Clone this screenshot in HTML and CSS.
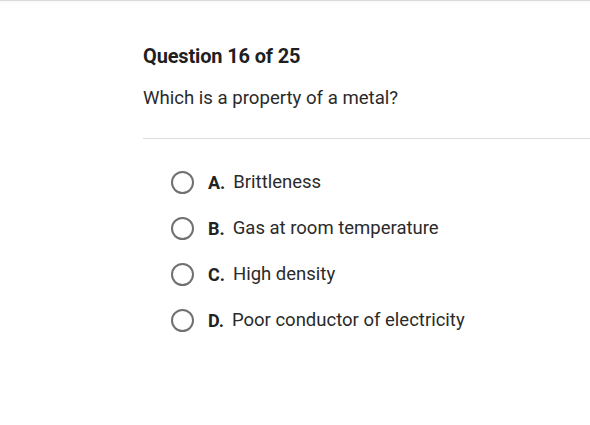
FILE: index.html
```html
<!DOCTYPE html>
<html>
<head>
<meta charset="utf-8">
<link rel="stylesheet" href="styles.css">
</head>
<body>
<div class="topbar"></div>
<main class="quiz">
  <h1 class="qnum">Question 16 of 25</h1>
  <p class="qtext">Which is a property of a metal?</p>
  <hr class="divider">
  <ul class="options">
    <li class="option"><span class="radio"></span><span class="letter">A.</span><span class="answer">Brittleness</span></li>
    <li class="option"><span class="radio"></span><span class="letter">B.</span><span class="answer">Gas at room temperature</span></li>
    <li class="option"><span class="radio"></span><span class="letter">C.</span><span class="answer">High density</span></li>
    <li class="option"><span class="radio"></span><span class="letter">D.</span><span class="answer">Poor conductor of electricity</span></li>
  </ul>
</main>
</body>
</html>
```

FILE: styles.css
```css
html, body {
  margin: 0;
  padding: 0;
  background: #ffffff;
}
body {
  font-family: Roboto, "Liberation Sans", sans-serif;
  color: #222222;
  width: 590px;
  height: 425px;
  overflow: hidden;
}
.topbar {
  height: 1px;
  background: #d9d9d9;
  box-shadow: 0 1px 3px rgba(0,0,0,0.08);
}
.quiz {
  padding: 43px 0 0 143px;
}
.qnum {
  margin: 0;
  font-size: 20px;
  font-weight: 700;
  line-height: 24px;
  color: #1f1f1f;
  letter-spacing: -0.15px;
}
.qtext {
  margin: 18px 0 0 0;
  font-size: 18.6px;
  line-height: 24px;
  color: #2a2a2a;
}
.divider {
  margin: 28px 0 0 0;
  border: 0;
  height: 1px;
  background: #dcdcdc;
}
.options {
  list-style: none;
  margin: 0;
  padding: 31px 0 0 28px;
  display: flex;
  flex-direction: column;
  gap: 22px;
}
.option {
  display: flex;
  align-items: center;
  height: 24px;
}
.radio {
  width: 19px;
  height: 19px;
  border: 2px solid #707070;
  border-radius: 50%;
  margin-right: 14px;
  flex: none;
}
.letter {
  font-weight: 700;
  font-size: 18px;
  color: #222;
  margin-right: 8px;
}
.answer {
  color: #2a2a2a;
  font-size: 18.5px;
}
```
